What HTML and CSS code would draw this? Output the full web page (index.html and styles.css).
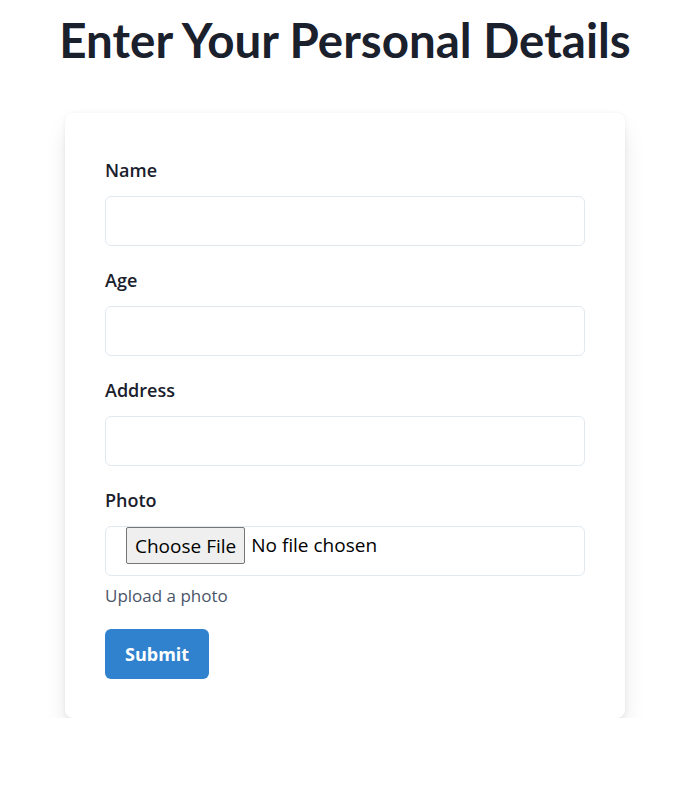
FILE: index.html
```html
<!DOCTYPE html>
<html lang="en">
<head>
<meta charset="utf-8">
<title>Personal Details</title>
<link rel="stylesheet" href="styles.css">
</head>
<body>
<main class="page">
  <h1 class="title">Enter Your Personal Details</h1>
  <form class="card">
    <div class="field">
      <label class="label" for="name">Name</label>
      <input class="input" id="name" type="text">
    </div>
    <div class="field">
      <label class="label" for="age">Age</label>
      <input class="input" id="age" type="text">
    </div>
    <div class="field">
      <label class="label" for="address">Address</label>
      <input class="input" id="address" type="text">
    </div>
    <div class="field">
      <label class="label" for="photo">Photo</label>
      <div class="file-box">
        <span class="file-btn">Choose File</span>
        <span class="file-text">No file chosen</span>
      </div>
      <p class="helper">Upload a photo</p>
    </div>
    <div class="actions">
      <button class="submit" type="button">Submit</button>
    </div>
  </form>
</main>
</body>
</html>
```

FILE: styles.css
```css
* { box-sizing: border-box; }
html, body { margin: 0; padding: 0; background: #ffffff; }
body {
  font-family: "Open Sans", "Noto Sans", sans-serif;
  color: #1A202C;
}
.page {
  display: flex;
  flex-direction: column;
  align-items: center;
  padding: 11px 4px 0 0;
}
.title {
  margin: 0 0 44px;
  font-family: "Lato", "Open Sans", sans-serif;
  font-size: 47.5px;
  line-height: 58px;
  font-weight: 700;
  color: #1A202C;
  text-align: center;
}
.card {
  width: 560px;
  padding: 44px 40px 39px;
  background: #fff;
  border-radius: 8px;
  box-shadow: 0 14px 24px -4px rgba(0,0,0,0.13), 0 6px 10px -4px rgba(0,0,0,0.06), 0 0 5px rgba(0,0,0,0.05);
  display: flex;
  flex-direction: column;
  gap: 21px;
}
.field { display: flex; flex-direction: column; }
.label {
  font-size: 18px;
  line-height: 27px;
  font-weight: 600;
  margin-bottom: 12px;
}
.input {
  height: 50px;
  width: 100%;
  border: 1px solid #E2E8F0;
  border-radius: 6px;
  padding: 0 16px;
  font: inherit;
  font-size: 18px;
  outline: none;
  background: #fff;
}
.file-box {
  height: 50px;
  border: 1px solid #E2E8F0;
  border-radius: 6px;
  display: flex;
  align-items: flex-start;
  padding: 0 0 0 20px;
  font-size: 19px;
  color: #1A202C;
}
.file-btn {
  height: 37px;
  display: flex;
  align-items: center;
  padding: 0 8px;
  background: #EFEFEF;
  border: 1px solid #767676;
  border-radius: 2px;
  margin-right: 6px;
  color: #000;
}
.file-text { color: #000; line-height: 37px; }
.helper {
  margin: 8px 0 0;
  font-size: 17px;
  line-height: 24px;
  color: #4A5568;
}
.actions { display: flex; }
.submit {
  height: 50px;
  padding: 0 20px;
  background: #3182CE;
  color: #fff;
  border: none;
  border-radius: 6px;
  font: inherit;
  font-size: 18px;
  font-weight: 700;
}
```
